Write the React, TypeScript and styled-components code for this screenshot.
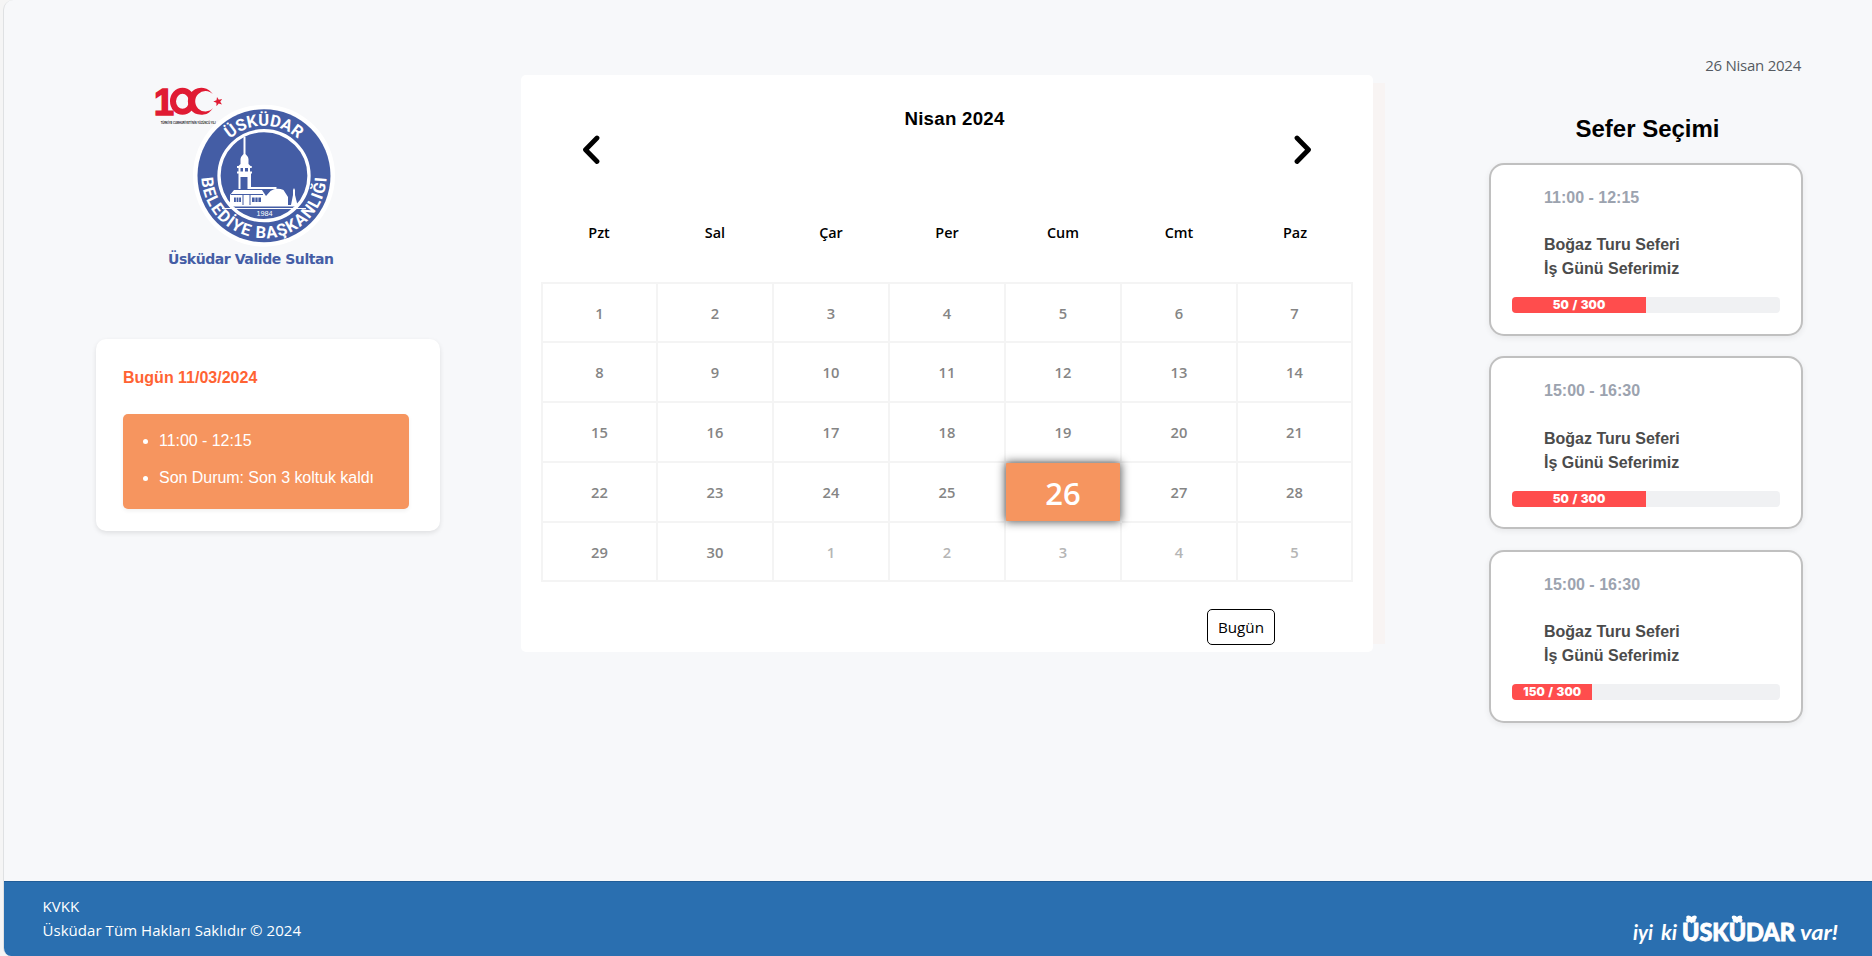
import React from "react";
import styled, { createGlobalStyle } from "styled-components";

const GlobalStyle = createGlobalStyle`
  * { box-sizing: border-box; }
  body { margin: 0; background: #f5f5f5; font-family: "Open Sans", "Noto Sans", sans-serif; }
  h1, h2, h3, p, ul { margin: 0; padding: 0; font-weight: inherit; }
`;

const arial = `"Liberation Sans", Arial, sans-serif`;

const Page = styled.div`
  height: 956px;
  margin-left: 3px;
  border-left: 1px solid #dfe1e3;
  border-radius: 10px 0 0 8px;
  background: #f7f8fa;
  overflow: hidden;
  display: flex;
  flex-direction: column;
`;

const Main = styled.main`
  flex: 1;
  display: flex;
`;

const Side = styled.aside`
  flex: none;
  width: 517px;
  padding: 85px 0 0 92px;
`;

const Brand = styled.div`
  width: 200px;
  margin-left: 52px;
  svg { display: block; overflow: visible; }
`;

const TodayCard = styled.section`
  width: 344px;
  height: 192px;
  margin-top: 64px;
  padding: 27px 31px 0 27px;
  background: #fff;
  border-radius: 10px;
  box-shadow: 0 2px 5px rgba(0, 0, 0, 0.1);
  font: 16px/24px ${arial};
`;

const TodayTitle = styled.h3`
  color: #ff6333;
  font-size: 16px;
  font-weight: bold;
`;

const TodayList = styled.ul`
  height: 95px;
  margin-top: 24px;
  padding: 8px 0 0 36px;
  background: #f6955f;
  border-radius: 5px;
  box-shadow: 0 2px 4px rgba(0, 0, 0, 0.06);
  color: #fff;
  letter-spacing: -0.04px;
  line-height: 37px;
  list-style: disc;
`;

const Calendar = styled.section`
  flex: none;
  width: 852px;
  height: 577px;
  margin-top: 75px;
  padding: 0 20px;
  background: #fff;
  border-radius: 5px;
  box-shadow: 20px 0 0 -8px #f8f4f3;
`;

const CalendarHeader = styled.header`
  height: 130px;
  padding: 33px 40px 0;
  display: grid;
  grid-template-columns: 20px 1fr 20px;
`;

const Month = styled.h2`
  padding-left: 15px;
  font: bold 18.7px/22px ${arial};
  letter-spacing: 0.25px;
  text-align: center;
  color: #000;
`;

const Arrow = styled.button`
  width: 20px;
  height: 30px;
  margin-top: 27px;
  padding: 0;
  border: 0;
  background: none;
  svg { display: block; }
`;

const Weekdays = styled.div`
  height: 77px;
  padding-top: 18px;
  display: grid;
  grid-template-columns: repeat(7, 1fr);
  text-align: center;
  font-size: 14.4px;
  font-weight: 600;
  line-height: 20px;
  color: #000;
`;

const Days = styled.div`
  height: 300px;
  display: grid;
  grid-template-columns: 115px 116px 116px 116px 116px 116px 115px;
  grid-template-rows: 59px 60px 60px 60px 59px;
  border-top: 2px solid #f4f4f4;
  border-left: 2px solid #f4f4f4;
`;

const Day = styled.div<{ $outside?: boolean }>`
  display: flex;
  align-items: center;
  justify-content: center;
  border-right: 2px solid #f4f4f4;
  border-bottom: 2px solid #f4f4f4;
  font-size: 14.7px;
  font-weight: 600;
  color: ${(p) => (p.$outside ? "#b5b5b5" : "#858585")};
`;

const Today = styled(Day)`
  position: relative;
  border-color: transparent;
  &::before {
    content: "";
    position: absolute;
    inset: 0;
    background: #f6955f;
    border-radius: 1px;
    box-shadow: 0 0 10px 1px rgba(0, 0, 0, 0.65);
  }
  span { position: relative; top: 1px; font-size: 31px; color: #fff; }
`;

const CalendarFooter = styled.footer`
  padding: 27px 78px 0 0;
  display: flex;
  justify-content: flex-end;
`;

const TodayButton = styled.button`
  width: 68px;
  height: 36px;
  padding: 0;
  border: 1px solid #000;
  border-radius: 5px;
  background: #fff;
  color: #000;
  font: 15.2px "Open Sans", sans-serif;
`;

const Trips = styled.aside`
  flex: 1;
  min-width: 0;
  padding: 53px 69px 0 116px;
`;

const DateLabel = styled.p`
  padding-right: 2px;
  text-align: right;
  font: 15px/24px "Open Sans", sans-serif;
  letter-spacing: -0.25px;
  color: #555b62;
`;

const TripsTitle = styled.h1`
  height: 86px;
  padding: 38px 0 0 3px;
  text-align: center;
  font: bold 24px/28px ${arial};
  color: #000;
`;

const TripList = styled.div`
  display: flex;
  flex-direction: column;
  gap: 20.4px;
`;

const Trip = styled.article`
  width: 314px;
  height: 173px;
  padding: 21px 21px 0;
  background: #fff;
  border: 2px solid #c0c0c0;
  border-radius: 15px;
  box-shadow: 0 2px 6px rgba(0, 0, 0, 0.07);
  font: bold 16px/24px ${arial};
`;

const TripTime = styled.p`
  padding-left: 32px;
  color: #9ca3af;
`;

const TripName = styled.p`
  margin-top: 23.2px;
  padding-left: 32px;
  color: #4b4b4b;
`;

const Track = styled.div`
  height: 16px;
  margin-top: 16px;
  background: #f0f1f3;
  border-radius: 4px;
  overflow: hidden;
`;

const Fill = styled.div`
  height: 100%;
  background: #ff4d4d;
  color: #fff;
  text-align: center;
  white-space: nowrap;
  font: 900 11.7px/16.6px Inter, sans-serif;
  word-spacing: 1.2px;
`;

const Footer = styled.footer`
  height: 75px;
  padding: 12px 32px 0 38.5px;
  border-top: 1px solid #215d98;
  background: #2a6fb0;
  color: #fff;
  display: flex;
  justify-content: space-between;
  font-size: 15px;
  line-height: 24px;
`;

const Legal = styled.div`
  letter-spacing: 0.05px;
`;

const Slogan = styled.div`
  width: 208px;
  padding-top: 15px;
  svg { display: block; }
`;

const Logo = () => (
  <svg width="200" height="190" viewBox="0 0 200 190">
    <defs>
      <path id="ringTop" d="M 66 90.700 A 50 50 0 0 1 166 90.700" />
      <path id="ringBottom" d="M 53.500 90.700 A 62.500 62.500 0 0 0 178.500 90.700" />
    </defs>
    <g fill="#e01b33" fontFamily="Liberation Sans, sans-serif" fontWeight="bold">
      <text x="6" y="29.500" fontSize="37" stroke="#e01b33" strokeWidth="1.600" textLength="20" lengthAdjust="spacingAndGlyphs">1</text>
      <ellipse cx="34.500" cy="16.300" rx="9.500" ry="10.500" fill="none" stroke="#e01b33" strokeWidth="6" />
      <path d="M65 9.500 A13.500 13.500 0 1 0 65 23.100 A10.200 10.200 0 1 1 65 9.500 Z" />
      <path d="M69 12 L70.800 14.800 L74.200 14 L72.200 16.700 L74 19.600 L70.700 18.600 L68.500 21.200 L68.400 17.800 L65.300 16.400 L68.500 15.300 Z" />
    </g>
    <text x="12.700" y="38.500" fontFamily="Liberation Sans, sans-serif" fontSize="4.200" fontWeight="bold" fill="#222" textLength="55" lengthAdjust="spacingAndGlyphs">TÜRKİYE CUMHURİYETİ'NİN YÜZÜNCÜ YILI</text>
    <circle cx="116" cy="90.700" r="71" fill="#fff" />
    <circle cx="116" cy="90.700" r="66.500" fill="#445da5" />
    <circle cx="116" cy="90.700" r="45" fill="#445da5" stroke="#fff" strokeWidth="3.300" />
    <g fontFamily="Roboto, sans-serif" fontWeight="700" fill="#fff">
      <text fontSize="16.500" textAnchor="middle"><textPath href="#ringTop" startOffset="50%">ÜSKÜDAR</textPath></text>
      <text fontSize="16.500" textAnchor="middle" textLength="192" lengthAdjust="spacing"><textPath href="#ringBottom" startOffset="50%">BELEDİYE BAŞKANLIĞI</textPath></text>
    </g>
    <g fill="#fff">
      <path d="M95.500 52 h2 v17 q3 3 3 5 v5 l2 2 h1 v2 h-14 v-2 h1 l2 -2 v-5 q0 -2 3 -5 z" />
      <path d="M89 81 h14.500 v2 h-1.500 v3.500 h2 v2 h-1 v13.500 h25.500 v2 h-38 v-15.500 h-1.500 v-2 h1.500 v-3.500 h-1.500 z" />
      <path d="M86 105 h28 l4 6 l4.500 -5 q6 -4 13 -1 l4.500 7 v8 H82 v-10 z" />
      <path d="M143 120 l2 -10 v-5 l1 -2 l1 2 v5 l2.500 10 z" />
      <path d="M81 120 h69 v1.500 H81 z M74 123 h84 v1 H74 z" />
    </g>
    <g fill="#445da5">
      <path d="M92.500 83 h2.500 v3.500 h-2.500 z M97 83 h3 v3.500 h-3 z M92.500 92 h7 v13 h-7 z" />
      <path d="M86 112.500 h7 v4.500 h-7 z M104 112.500 h9 v4.500 h-9 z M83 109 h32 v1 h-32 z M94.500 109 h1 v11 h-1 z M101.500 109 h1 v11 h-1 z" />
    </g>
    <path d="M88.300 112 v5.500 M90.700 112 v5.500 M107 112 v5.500 M110 112 v5.500" stroke="#fff" strokeWidth=".7" />
    <text x="116.500" y="131" fontFamily="Liberation Sans, sans-serif" fontSize="7.300" fill="#fff" textAnchor="middle">1984</text>
    <text x="20" y="179" fontFamily="DejaVu Sans, sans-serif" fontSize="14" fontWeight="bold" fill="#445da5" textLength="166">Üsküdar Valide Sultan</text>
  </svg>
);

const SloganMark = () => (
  <svg width="208" height="44" viewBox="0 0 208 44" fill="#fff">
    <g fontFamily="Lato, sans-serif" fontWeight="700" fontStyle="italic" fontSize="21">
      <text x="1" y="31" textLength="20" lengthAdjust="spacingAndGlyphs">iyi</text>
      <text x="29" y="31" textLength="16" lengthAdjust="spacingAndGlyphs">ki</text>
      <text x="168" y="31" textLength="38" lengthAdjust="spacingAndGlyphs">var!</text>
    </g>
    <text x="50" y="31.700" fontFamily="Lato, sans-serif" fontWeight="900" fontSize="24.300" stroke="#fff" strokeWidth=".9" textLength="113" lengthAdjust="spacingAndGlyphs">ÜSKÜDAR</text>
    <path d="M59.500 14.500 l-5 -5 q-1 -3 2 -3 q2 0 3 1.500 q1 -1.500 3 -1.500 q3 0 2 3 z M105 14.500 l-5 -5 q-1 -3 2 -3 q2 0 3 1.500 q1 -1.500 3 -1.500 q3 0 2 3 z" />
  </svg>
);

const Chevron = ({ d }: { d: string }) => (
  <svg width="20" height="30" viewBox="0 0 20 30">
    <path d={d} fill="none" stroke="#000" strokeWidth="4.800" strokeLinecap="round" strokeLinejoin="round" />
  </svg>
);

const weekdays = ["Pzt", "Sal", "Çar", "Per", "Cum", "Cmt", "Paz"];
const trips = [
  { time: "11:00 - 12:15", seats: "50 / 300", fill: 50 },
  { time: "15:00 - 16:30", seats: "50 / 300", fill: 50 },
  { time: "15:00 - 16:30", seats: "150 / 300", fill: 30 },
];

export default function App() {
  return (
    <>
      <GlobalStyle />
      <Page>
        <Main>
          <Side>
            <Brand><Logo /></Brand>
            <TodayCard>
              <TodayTitle>Bugün 11/03/2024</TodayTitle>
              <TodayList>
                <li>11:00 - 12:15</li>
                <li>Son Durum: Son 3 koltuk kaldı</li>
              </TodayList>
            </TodayCard>
          </Side>
          <Calendar>
            <CalendarHeader>
              <Arrow aria-label="Önceki ay"><Chevron d="M16 3 L4.500 14.700 L16 26.500" /></Arrow>
              <Month>Nisan 2024</Month>
              <Arrow aria-label="Sonraki ay"><Chevron d="M4 3 L15.500 14.700 L4 26.500" /></Arrow>
            </CalendarHeader>
            <Weekdays>{weekdays.map((d) => <div key={d}>{d}</div>)}</Weekdays>
            <Days>
              {Array.from({ length: 35 }, (_, i) => {
                const n = i + 1;
                if (n === 26) return <Today key={n}><span>26</span></Today>;
                return <Day key={n} $outside={n > 30}>{n > 30 ? n - 30 : n}</Day>;
              })}
            </Days>
            <CalendarFooter><TodayButton>Bugün</TodayButton></CalendarFooter>
          </Calendar>
          <Trips>
            <DateLabel>26 Nisan 2024</DateLabel>
            <TripsTitle>Sefer Seçimi</TripsTitle>
            <TripList>
              {trips.map((t, i) => (
                <Trip key={i}>
                  <TripTime>{t.time}</TripTime>
                  <TripName>Boğaz Turu Seferi<br />İş Günü Seferimiz</TripName>
                  <Track><Fill style={{ width: `${t.fill}%` }}>{t.seats}</Fill></Track>
                </Trip>
              ))}
            </TripList>
          </Trips>
        </Main>
        <Footer>
          <Legal>
            <p>KVKK</p>
            <p>Üsküdar Tüm Hakları Saklıdır © 2024</p>
          </Legal>
          <Slogan><SloganMark /></Slogan>
        </Footer>
      </Page>
    </>
  );
}
